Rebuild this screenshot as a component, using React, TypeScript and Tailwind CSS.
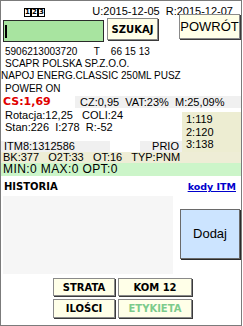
const btn =
  "bg-[#ffffe8] border border-[#8a8a8a] shadow-[1px_1px_0_#3a3a3a] flex items-center justify-center";

function Digits() {
  return (
    <div className="flex">
      {["1", "2", "3"].map((d) => (
        <span
          key={d}
          className="w-[7px] h-[9px] border border-black bg-white text-[7px] leading-[7px] font-bold flex items-center justify-center font-['DejaVu_Sans',sans-serif]"
        >
          {d}
        </span>
      ))}
    </div>
  );
}

export default function App() {
  return (
    <div className="w-[243px] h-[326px] bg-white text-black font-['Liberation_Sans',Arial,sans-serif]">
      <div className="w-[242px] h-[326px] border border-[#7b7b7b] flex flex-col overflow-hidden">
        {/* header */}
        <div className="h-[13px] flex items-start">
          <div className="ml-[23px] mt-[7px]">
            <Digits />
          </div>
          <div className="ml-auto mr-[8px] mt-[4px] text-[11px] leading-[13px] whitespace-pre">
            U:2015-12-05  R:2015-12-07
          </div>
        </div>

        {/* search row */}
        <div className="h-[28px] flex items-start">
          <div className="ml-[2px] mt-[6px] w-[101px] h-[22px] bg-[#a8e4a0] border border-[#2a2a2a] flex items-center">
            <span className="ml-[1px] w-[2px] h-[13px] bg-black" />
          </div>
          <button
            className={`${btn} ml-[3px] mt-[4px] w-[51px] h-[22px] text-[10px] font-bold font-['DejaVu_Sans',sans-serif]`}
          >
            SZUKAJ
          </button>
          <button className={`${btn} ml-auto mr-[1px] mt-0 w-[61px] h-[25px] text-[13px]`}>
            POWRÓT
          </button>
        </div>

        {/* product info */}
        <div className="pt-[3px] text-[10px] whitespace-pre">
          <div className="pl-[4px] h-[13px] leading-[13px]">5906213003720      T    66 15 13</div>
          <div className="pl-[4px] h-[12px] leading-[12px]">SCAPR POLSKA SP.Z.O.O.</div>
          <div className="pl-0 h-[12px] leading-[12px]">NAPOJ ENERG.CLASSIC 250ML PUSZ</div>
          <div className="pl-[4px] h-[13px] leading-[13px]">POWER ON</div>
        </div>

        {/* price row */}
        <div className="h-[13px] flex items-center">
          <div className="w-[74px] pl-[2px] text-[11px] leading-[13px] font-bold text-[#e00000] font-['DejaVu_Sans',sans-serif]">
            CS:1,69
          </div>
          <div className="flex-1 h-[12px] bg-[#f0f0f0] pl-[5px] text-[11px] leading-[12px] whitespace-pre">
            CZ:0,95  VAT:23%  M:25,09%
          </div>
        </div>

        {/* stock + right box */}
        <div className="flex text-[11px]">
          <div className="w-[181px] pt-[1px]">
            <div className="pl-[4px] h-[12px] leading-[12px] whitespace-pre">Rotacja:12,25   COLI:24</div>
            <div className="pl-[4px] h-[12px] leading-[12px] whitespace-pre">Stan:226  I:278  R:-52</div>
            <div className="h-[8px]" />
            <div className="flex h-[11px] leading-[11px]">
              <div className="w-[109px] bg-[#f0f0f0] pl-[3px]">ITM8:1312586</div>
              <div className="w-[30px]" />
              <div className="flex-1 bg-[#f0f0f0] text-right pr-[3px]">PRIO</div>
            </div>
          </div>
          <div className="flex-1 mt-[4px] h-[40px] bg-[#ededd2] pl-[4px] pt-[1px] leading-[12.5px]">
            <div>1:119</div>
            <div>2:120</div>
            <div>3:138</div>
          </div>
        </div>

        <div className="h-[11px] bg-[#eeedd6] pl-[2px] text-[11px] leading-[11px] whitespace-pre">
          BK:377   O2T:33   OT:16   TYP:PNM
        </div>
        <div className="h-[13px] bg-[#ccf5c9] pl-[2px] text-[12px] leading-[13px] tracking-[0.4px] whitespace-pre">
          MIN:0 MAX:0 OPT:0
        </div>

        {/* historia */}
        <div className="h-[20px] flex items-center justify-between">
          <span className="pl-[3px] mt-[1px] text-[10px] font-bold font-['DejaVu_Sans',sans-serif]">HISTORIA</span>
          <a className="mr-[5px] mt-[3px] text-[9.5px] font-bold text-[#0000cc] underline font-['DejaVu_Sans',sans-serif]">
            kody ITM
          </a>
        </div>

        <div className="flex">
          <div className="ml-[2px] w-[170px] h-[78px] bg-[#f6f6f6]" />
          <button className="ml-[7px] mt-[13px] w-[60px] h-[50px] bg-[#cce4ff] border border-[#6a6a6a] shadow-[1px_1px_0_#2a2a2a] text-[13px]">
            Dodaj
          </button>
        </div>

        {/* bottom buttons */}
        <div className="mt-[4px] ml-[52px] grid grid-cols-[62px_74px] gap-x-[3px] gap-y-[3px] text-[10px] font-bold font-['DejaVu_Sans',sans-serif]">
          <button className={`${btn} h-[18px]`}>STRATA</button>
          <button className={`${btn} h-[18px]`}>KOM 12</button>
          <button className={`${btn} h-[19px]`}>ILOŚCI</button>
          <button className={`${btn} h-[19px] text-[#7ccb8c]`}>ETYKIETA</button>
        </div>
      </div>
    </div>
  );
}
